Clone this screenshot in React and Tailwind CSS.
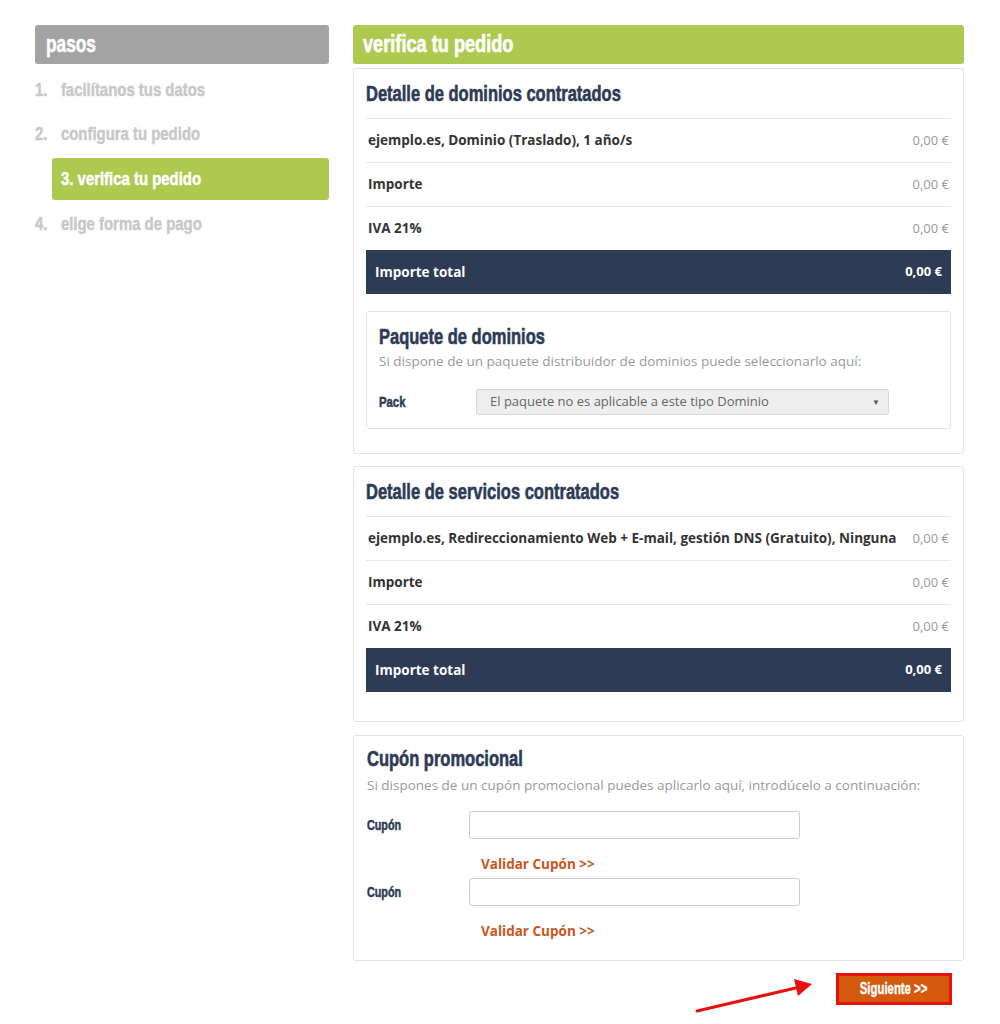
import React from "react";

const H = { fontFamily: '"Liberation Sans", Arial, sans-serif' };
const B = { fontFamily: '"Open Sans", "Liberation Sans", sans-serif' };

function Row({ label, price }) {
  return (
    <div className="flex items-center justify-between h-[44px] border-t border-[#e6e6e6] px-[2px]">
      <span className="text-[13.5px] font-bold text-[#333]">{label}</span>
      <span className="text-[13px] text-[#999]">{price}</span>
    </div>
  );
}

function Total() {
  return (
    <div className="flex items-center justify-between h-[44px] bg-[#2d3b55] px-[9px]">
      <span className="text-[13.5px] font-bold text-white">Importe total</span>
      <span className="text-[13px] font-bold text-white">0,00 €</span>
    </div>
  );
}

function Heading({ children }) {
  return (
    <h2 className="text-[22px] font-bold text-[#2d3b55] leading-[26px] whitespace-nowrap [-webkit-text-stroke:0.6px_currentColor]" style={H}>
      <span className="inline-block origin-left scale-x-[0.75]">{children}</span>
    </h2>
  );
}

function Step({ n, text }) {
  return (
    <span className="inline-block origin-left scale-x-[0.785] whitespace-nowrap text-[19px] font-bold text-[#c8c8c8] [-webkit-text-stroke:0.5px_currentColor]" style={H}>
      <span className="inline-block w-[33px]">{n}</span>
      {text}
    </span>
  );
}

function Coupon() {
  return (
    <div>
      <div className="flex items-center">
        <span className="w-[102px] text-[14px] font-bold text-[#2d3b55] whitespace-nowrap [-webkit-text-stroke:0.5px_currentColor]" style={H}>
          <span className="inline-block origin-left scale-x-[0.77]">Cupón</span>
        </span>
        <div className="w-[331px] h-[28px] border border-[#ccc] rounded-[3px] bg-white"></div>
      </div>
      <div className="pl-[114px] pt-[16px] text-[13.5px] font-bold text-[#c8561b] leading-[18px]">Validar Cupón &gt;&gt;</div>
    </div>
  );
}

export default function App() {
  return (
    <div className="w-[1000px] h-[1024px] bg-white relative" style={B}>
      <div className="flex pt-[25px] pl-[35px] gap-[24px]">
        <div className="w-[294px] flex flex-col">
          <div className="h-[39px] rounded-[3px] bg-[#a3a3a3] flex items-center px-[11px]">
            <span className="text-white text-[23px] font-bold whitespace-nowrap [-webkit-text-stroke:0.6px_currentColor]" style={H}>
              <span className="inline-block origin-left scale-x-[0.75]">pasos</span>
            </span>
          </div>
          <div className="h-[52px] flex items-center">
            <Step n="1." text="facilítanos tus datos" />
          </div>
          <div className="h-[36px] flex items-center">
            <Step n="2." text="configura tu pedido" />
          </div>
          <div className="ml-[17px] mt-[6px] h-[42px] rounded-[3px] bg-[#aec950] flex items-center px-[9px]">
            <span className="inline-block origin-left scale-x-[0.785] whitespace-nowrap text-[19px] font-bold text-white [-webkit-text-stroke:0.5px_currentColor]" style={H}>
              3. verifica tu pedido
            </span>
          </div>
          <div className="h-[48px] flex items-center">
            <Step n="4." text="elige forma de pago" />
          </div>
        </div>

        <div className="w-[611px] flex flex-col">
          <div className="h-[39px] rounded-[3px] bg-[#aec950] flex items-center px-[10px]">
            <span className="text-white text-[23px] font-bold whitespace-nowrap [-webkit-text-stroke:0.6px_currentColor]" style={H}>
              <span className="inline-block origin-left scale-x-[0.79]">verifica tu pedido</span>
            </span>
          </div>

          <div className="mt-[4px] border border-[#e3e3e3] rounded-[3px] px-[12px] pb-[24px]">
            <div className="h-[49px] flex items-center pt-[1px]">
              <Heading>Detalle de dominios contratados</Heading>
            </div>
            <Row label="ejemplo.es, Dominio (Traslado), 1 año/s" price="0,00 €" />
            <Row label="Importe" price="0,00 €" />
            <Row label="IVA 21%" price="0,00 €" />
            <Total />
            <div className="mt-[17px] border border-[#e3e3e3] rounded-[3px] px-[12px] pt-[12px] pb-[13px]">
              <Heading>Paquete de dominios</Heading>
              <p className="text-[13.5px] text-[#999] mt-[1px] leading-[20px]">Si dispone de un paquete distribuidor de dominios puede seleccionarlo aquí:</p>
              <div className="flex items-center mt-[18px]">
                <span className="w-[97px] text-[14px] font-bold text-[#2d3b55] whitespace-nowrap [-webkit-text-stroke:0.5px_currentColor]" style={H}>
                  <span className="inline-block origin-left scale-x-[0.81]">Pack</span>
                </span>
                <div className="w-[413px] h-[26px] bg-[#eeeeee] border border-[#d6d6d6] rounded-[3px] flex items-center justify-between pl-[13px] pr-[8px]">
                  <span className="text-[13px] text-[#666]">El paquete no es aplicable a este tipo Dominio</span>
                  <span className="text-[8px] text-[#555]">▼</span>
                </div>
              </div>
            </div>
          </div>

          <div className="mt-[12px] border border-[#e3e3e3] rounded-[3px] px-[12px] pb-[29px]">
            <div className="h-[49px] flex items-center">
              <Heading>Detalle de servicios contratados</Heading>
            </div>
            <Row label="ejemplo.es, Redireccionamiento Web + E-mail, gestión DNS (Gratuito), Ninguna" price="0,00 €" />
            <Row label="Importe" price="0,00 €" />
            <Row label="IVA 21%" price="0,00 €" />
            <Total />
          </div>

          <div className="mt-[13px] border border-[#e3e3e3] rounded-[3px] px-[13px] pt-[10px] pb-[20px]">
            <Heading>Cupón promocional</Heading>
            <p className="text-[13.5px] text-[#999] mt-[3px] leading-[20px]">Si dispones de un cupón promocional puedes aplicarlo aquí, introdúcelo a continuación:</p>
            <div className="mt-[16px] flex flex-col gap-[5px]">
              <Coupon />
              <Coupon />
            </div>
          </div>

          <div className="flex justify-end pr-[12px] mt-[12px]">
            <div className="w-[116px] h-[32px] bg-[#d35a0c] border-[3px] border-[#e8110f] flex items-center justify-center">
              <span className="text-white text-[16px] font-bold whitespace-nowrap [-webkit-text-stroke:0.4px_currentColor]" style={H}>
                <span className="inline-block scale-x-[0.71]">Siguiente &gt;&gt;</span>
              </span>
            </div>
          </div>
        </div>
      </div>

      <svg className="absolute left-[690px] top-[975px]" width="130" height="45" viewBox="0 0 130 45">
        <line x1="7" y1="36" x2="110" y2="12" stroke="#e8110f" strokeWidth="3" strokeLinecap="round" />
        <polygon points="122,9 104,4 108,21" fill="#e8110f" />
      </svg>
    </div>
  );
}
